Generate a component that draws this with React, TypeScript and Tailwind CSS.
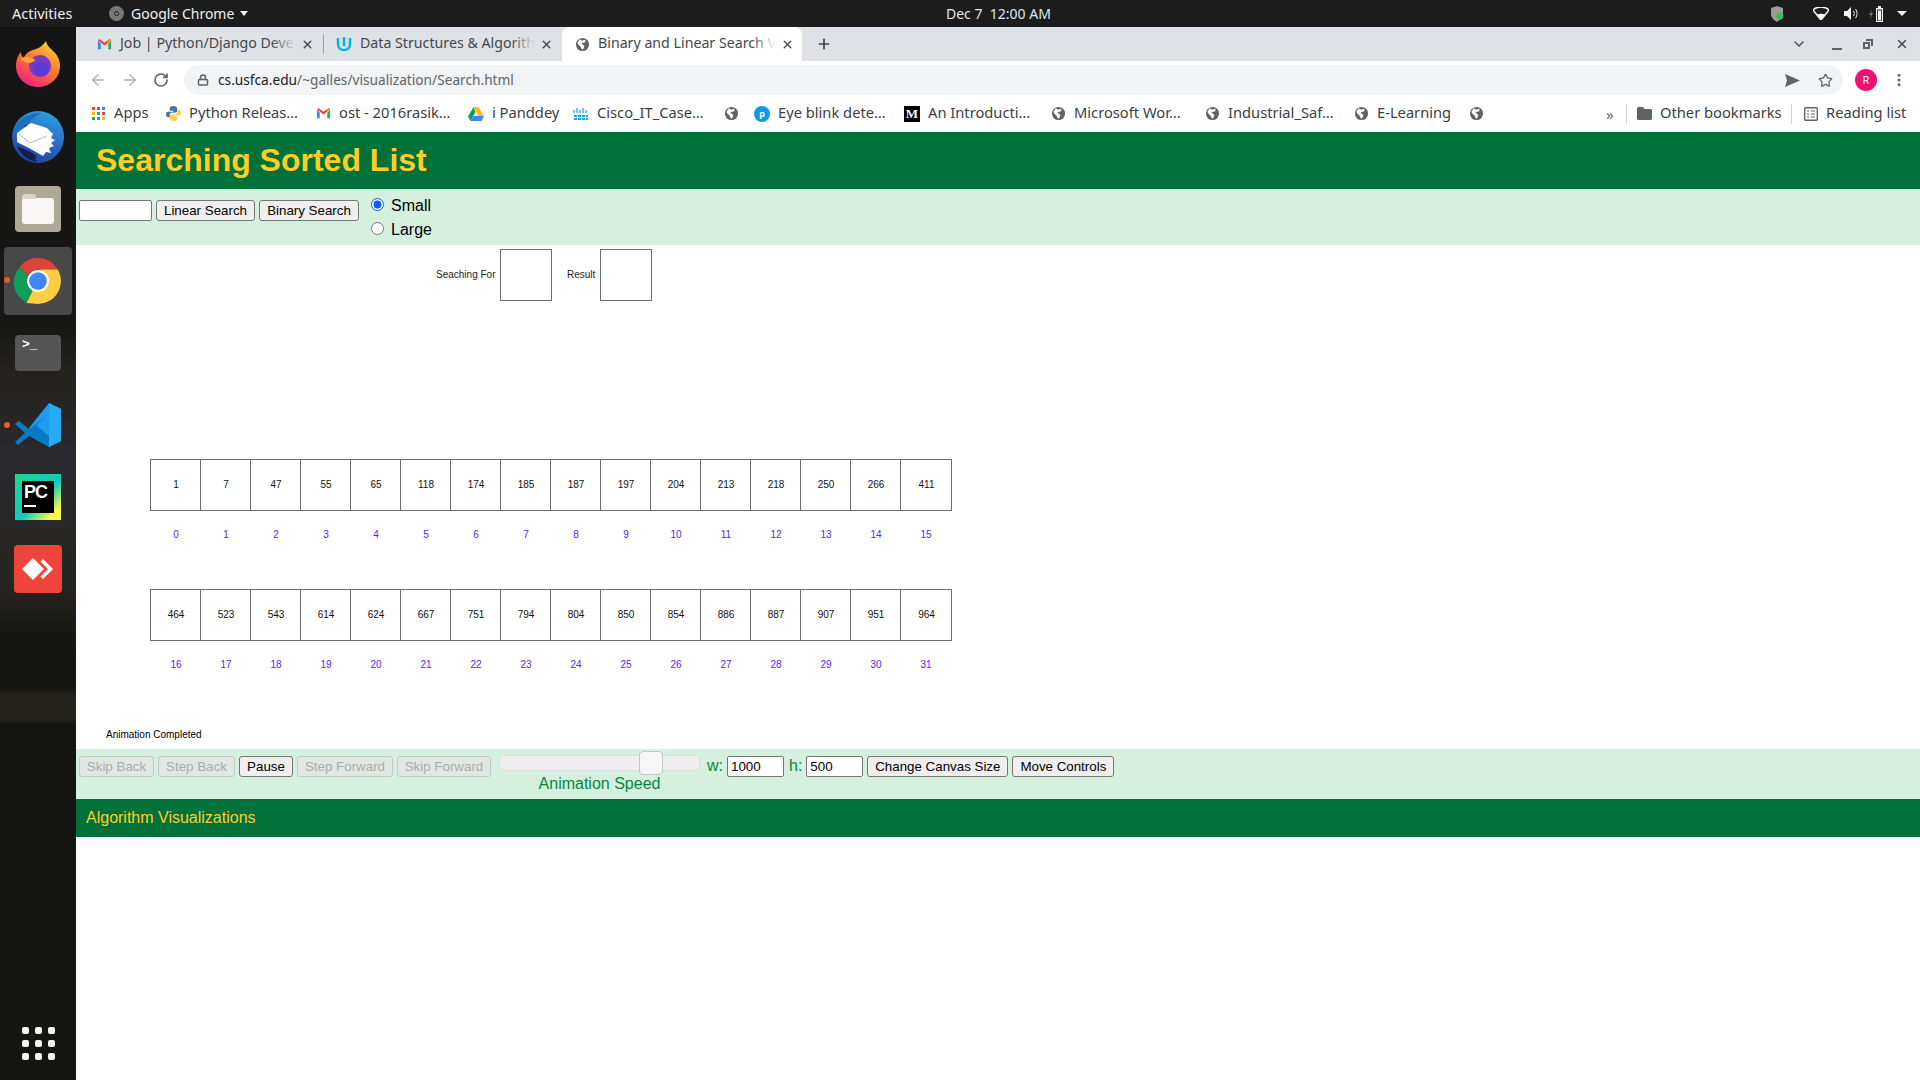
import { Lock, ArrowLeft, ArrowRight, RotateCw, Star, X, Plus, ChevronDown, EllipsisVertical } from "lucide-react";

const row1 = [1, 7, 47, 55, 65, 118, 174, 185, 187, 197, 204, 213, 218, 250, 266, 411];
const row2 = [464, 523, 543, 614, 624, 667, 751, 794, 804, 850, 854, 886, 887, 907, 951, 964];

const uiFont = "font-['Noto_Sans',sans-serif]";

function Gmail({ size = 16 }: { size?: number }) {
    return (
        <svg width={size} height={size} viewBox="0 0 16 16">
            <path d="M1 4v9h3V7z" fill="#4285f4" />
            <path d="M12 7v6h3V4z" fill="#34a853" />
            <path d="M1 3.5 8 9l7-5.5L13.5 2 8 6 2.5 2z" fill="#ea4335" />
            <path d="M12 3.2 15 4l-3 3z" fill="#fbbc04" />
        </svg>
    );
}

function Globe({ size = 16 }: { size?: number }) {
    return (
        <svg width={size} height={size} viewBox="0 0 16 16">
            <circle cx="8" cy="8" r="7" fill="#5f6368" />
            <path d="M5 2.5 8 4l2-1 1.5 1L10 6H8L7 7.500 9 8.500l1 1-1 3-1.500 1L6 10.500 3.500 8 2.500 6z" fill="#fff" />
        </svg>
    );
}

function Chrome({ size = 62 }: { size?: number }) {
    return (
        <svg width={size} height={size} viewBox="0 0 48 48">
            <path d="M24 2a22 22 0 0 1 19 11H24a11 11 0 0 0-10 6L6.500 10.500A22 22 0 0 1 24 2z" fill="#db4437" />
            <path d="M6.500 10.500 14 19a11 11 0 0 0 5 14l-6 12A22 22 0 0 1 6.500 10.500z" fill="#0f9d58" />
            <path d="M43 13a22 22 0 0 1-19 33l-11-1 6-12a11 11 0 0 0 14-5 11 11 0 0 0-9-15z" fill="#ffcd40" />
            <circle cx="24" cy="24" r="10.500" fill="#fff" />
            <circle cx="24" cy="24" r="8.500" fill="#4285f4" />
        </svg>
    );
}

function Firefox() {
    return (
        <svg width="48" height="48" viewBox="0 0 48 48">
            <defs>
                <linearGradient id="ff" x1="0.8" y1="0" x2="0.2" y2="1">
                    <stop offset="0" stopColor="#ffd43a" />
                    <stop offset="0.45" stopColor="#ff7a2a" />
                    <stop offset="1" stopColor="#f0188a" />
                </linearGradient>
            </defs>
            <path d="M32 1c1 5 4 7 8 11 5 5 6 10 6 14 0 12-10 21-22 21S2 38 2 26c0-6 2-11 5-14 0 3 1 5 3 6 1-4 5-7 9-8 4-1 9-3 13-9z" fill="url(#ff)" />
            <circle cx="26" cy="26" r="11" fill="#7b3bc4" />
            <ellipse cx="27" cy="29" rx="8" ry="6.500" fill="#5a3ad0" />
            <path d="M6 19c5-3 10-2 14 0 3 2-2 3-4 4-3 0-7-1-10-4z" fill="#ffa436" />
        </svg>
    );
}

function Thunderbird() {
    return (
        <svg width="54" height="54" viewBox="0 0 54 54">
            <defs>
                <linearGradient id="tb" x1="0.7" y1="0" x2="0.3" y2="1">
                    <stop offset="0" stopColor="#2a9fe0" />
                    <stop offset="0.6" stopColor="#2a62bd" />
                    <stop offset="1" stopColor="#1d3f9c" />
                </linearGradient>
            </defs>
            <circle cx="27" cy="27" r="26" fill="url(#tb)" />
            <path d="M4 20C8 8 18 3 30 3c-6 4-10 6-12 10L6 23z" fill="#1a6fc0" />
            <path d="M6 36c3 8 10 14 20 16-2-3-2-5 0-6l-8-5z" fill="#171d4e" />
            <circle cx="15" cy="16" r="1.500" fill="#5a3a1a" />
            <path d="M6 23 20 13l16 5 6 6-2 4 4 2-4 3 3 3-5 2 2 5-5-1-3 4-14-8-12-6z" fill="#fff" />
            <path d="M8 24l11 9 17-7" stroke="#b8b8b8" strokeWidth="1" fill="none" />
        </svg>
    );
}

function VsCode() {
    return (
        <svg width="46" height="46" viewBox="0 0 46 46">
            <path d="M34 1 46 7v32l-12 6-20-19z" fill="#1f9cf0" />
            <path d="M34 1v44l12-6V7z" fill="#2aa9f5" />
            <path d="M34 12 14 27 4 19 0 22l10 9L0 40l3 3 11-9 20 11V34L21 23z" fill="#0b7ac4" />
        </svg>
    );
}

function PyCharm() {
    return (
        <div className="relative w-[46px] h-[46px] bg-[linear-gradient(135deg,#21d789_0%,#10c9c0_55%,#fcf84a_85%)] flex items-center justify-center">
            <div className="w-[32px] h-[32px] bg-black flex flex-col pl-[2px] pt-[1px]">
                <span className="font-['Liberation_Sans',sans-serif] font-bold text-white text-[18px] leading-[20px] tracking-tighter">PC</span>
                <span className="w-[12px] h-[2px] bg-white mt-[3px]"></span>
            </div>
        </div>
    );
}

function AnyDesk() {
    return (
        <div className="w-[48px] h-[48px] rounded-[4px] bg-[#ef443b] flex items-center justify-center">
            <svg width="34" height="24" viewBox="0 0 34 24">
                <path d="M12 1l11 11-11 11L1 12z" fill="#fff" />
                <path d="M22 2l10 10-10 10-2.500-2.500L27 12l-7.500-7.500z" fill="#fff" />
            </svg>
        </div>
    );
}

function Dock() {
    return (
        <div className="relative w-[76px] shrink-0 h-full flex flex-col items-center bg-[linear-gradient(180deg,#141414_0px,#171716_300px,#24231f_350px,#2a2a30_430px,#26251f_560px,#161614_610px,#141412_660px,#23221a_668px,#23221a_692px,#141412_698px,#141412_100%)]">
            <div className="h-[48px] mt-[13px] flex items-center justify-center"><Firefox /></div>
            <div className="h-[54px] mt-[22px] flex items-center justify-center"><Thunderbird /></div>
            <div className="mt-[22px] w-[46px] h-[46px] rounded-[4px] bg-[#aea898] flex items-center justify-center">
                <div className="relative w-[32px] h-[26px] rounded-[3px] bg-[#f7f6f4] mt-[4px]">
                    <div className="absolute -top-[4px] left-0 w-[14px] h-[5px] rounded-t-[3px] bg-[#d8d4ca]"></div>
                </div>
            </div>
            <div className="relative mt-[15px] w-[68px] h-[68px] rounded-[4px] bg-[#484848] flex items-center justify-center">
                <Chrome size={50} />
                <span className="absolute left-[0px] top-[30px] w-[6px] h-[6px] rounded-full bg-[#ee5a24]"></span>
            </div>
            <div className="mt-[20px] w-[46px] h-[36px] rounded-[4px] bg-[#555555] text-white font-['Liberation_Mono',monospace] font-bold text-[13px] leading-[14px] pl-[7px] pt-[3px]">&gt;_</div>
            <div className="relative mt-[31px] flex items-center justify-center">
                <VsCode />
                <span className="absolute -left-[11px] top-[20px] w-[6px] h-[6px] rounded-full bg-[#ee5a24]"></span>
            </div>
            <div className="mt-[26px]"><PyCharm /></div>
            <div className="mt-[25px]"><AnyDesk /></div>
            <div className="mt-auto mb-[20px] grid grid-cols-3 gap-[6px]">
                {Array.from({ length: 9 }).map((_, i) => (
                    <span key={i} className="w-[7px] h-[7px] rounded-[2px] bg-[#f2f2f2]"></span>
                ))}
            </div>
        </div>
    );
}

function TopBar() {
    return (
        <div className={`relative h-[27px] shrink-0 bg-[#1c1c1c] text-[#f0f0f0] text-[14px] flex items-center ${uiFont}`}>
            <span className="ml-[12px] w-[97px] text-[14.500px]">Activities</span>
            <span className="w-[15px] h-[15px] rounded-full bg-[#777777] flex items-center justify-center">
                <span className="w-[5px] h-[5px] rounded-full border border-[#1c1c1c]"></span>
            </span>
            <span className="ml-[7px]">Google Chrome</span>
            <span className="ml-[6px] border-x-[4px] border-x-transparent border-t-[5px] border-t-[#f0f0f0]"></span>
            <span className="absolute left-[946px] top-[3px] w-[104px] text-center text-[#dbe7f0] leading-[21px] whitespace-pre">Dec 7  12:00 AM</span>
            <div className="ml-auto flex items-center">
                <svg width="14" height="16" viewBox="0 0 14 16" className="mr-[29px]">
                    <path d="M7 0l6 2v6c0 4-3 6-6 8-3-2-6-4-6-8V2z" fill="#9a9a9a" />
                    <circle cx="10" cy="10" r="3.500" fill="#3dbb5c" />
                </svg>
                <svg width="16" height="13" viewBox="0 0 16 13" className="mr-[15px]">
                    <path d="M0 3c4-4 12-4 16 0L8 13z" fill="none" stroke="#f5f5f5" strokeWidth="1.500" />
                    <path d="M4 7.500c2-1 6-1 8 0L8 12.500z" fill="#f5f5f5" />
                </svg>
                <svg width="15" height="13" viewBox="0 0 15 13" className="mr-[10px]">
                    <path d="M0 4h3l4-4v13l-4-4H0z" fill="#f5f5f5" />
                    <path d="M9.500 4c1 1.500 1 3.500 0 5M11.500 2c2 2.500 2 6.500 0 9" fill="none" stroke="#f5f5f5" strokeWidth="1" />
                </svg>
                <svg width="14" height="16" viewBox="0 0 14 16" className="mr-[14px]">
                    <path d="M3 3 0 9h2l-1 4 3-6H2z" fill="#777777" />
                    <path d="M7 2h2V0h3v2h2v14H7z" fill="#f5f5f5" />
                    <rect x="8" y="3.500" width="5" height="11.500" fill="#1c1c1c" />
                    <rect x="8.800" y="4.500" width="3.400" height="10" fill="#f5f5f5" />
                </svg>
                <span className="mr-[13px] border-x-[5px] border-x-transparent border-t-[5px] border-t-[#f0f0f0]"></span>
            </div>
        </div>
    );
}

function Tab({ title, icon, active, width }: { title: string; icon: React.ReactNode; active?: boolean; width: string }) {
    return (
        <div className={`${width} h-full flex items-center pl-[12px] pr-[9px] shrink-0 ${active ? "bg-white rounded-t-[8px]" : ""}`}>
            <span className="w-[16px] h-[16px] shrink-0 flex items-center justify-center">{icon}</span>
            <span className="relative ml-[8px] flex-1 whitespace-nowrap text-[14.200px] leading-[18px] -mt-[2px] text-[#45474a]">
                {title}
                <span className={`absolute right-0 top-0 bottom-0 w-[24px] bg-gradient-to-r from-transparent ${active ? "to-white" : "to-[#dee1e6]"}`}></span>
            </span>
            <X size={13} strokeWidth={2.5} className="ml-[5px] shrink-0 text-[#45474a]" />
        </div>
    );
}

function TabStrip() {
    return (
        <div className={`h-[34px] shrink-0 bg-[#dee1e6] flex items-end ${uiFont}`}>
            <div className="w-[8px] shrink-0"></div>
            <Tab width="w-[239px]" title="Job | Python/Django Deve" icon={<Gmail size={15} />} />
            <span className="w-px h-[20px] bg-[#9aa0a6] mb-[7px] shrink-0"></span>
            <Tab
                width="w-[238px]"
                title="Data Structures & Algorith"
                icon={
                    <svg width="16" height="16" viewBox="0 0 16 16">
                        <path d="M2 2v6c0 4 3 6 6 6s6-2 6-6V2M8 1v9" fill="none" stroke="#02b3e4" strokeWidth="2.500" />
                    </svg>
                }
            />
            <Tab width="w-[240px]" active title="Binary and Linear Search V" icon={<Globe size={15} />} />
            <Plus size={16} strokeWidth={2.5} className="ml-[14px] mb-[9px] text-[#45474a]" />
            <div className="ml-auto h-full flex items-center text-[#45474a]">
                <ChevronDown size={16} strokeWidth={2} className="mr-[25px]" />
                <span className="w-[10px] h-[2px] bg-[#5f6368] mt-[10px] mr-[21px]"></span>
                <svg width="10" height="10" viewBox="0 0 10 10" className="mr-[22px]">
                    <path d="M3 0h7v7H8V2H3z M0 3h7v7H0z" fill="#5f6368" />
                    <rect x="2" y="5" width="3" height="3" fill="#dee1e6" />
                </svg>
                <X size={14} strokeWidth={2.5} className="mr-[11px]" />
            </div>
        </div>
    );
}

function Toolbar() {
    return (
        <div className={`h-[34px] shrink-0 bg-white flex items-start pt-[4px] ${uiFont}`}>
            <div className="w-[108px] h-[30px] shrink-0 flex items-center pl-[13px] gap-[14px] text-[#b0b3b8]">
                <ArrowLeft size={18} strokeWidth={2} />
                <ArrowRight size={18} strokeWidth={2} />
                <RotateCw size={16} strokeWidth={2.5} className="text-[#5f6368]" />
            </div>
            <div className="w-[1659px] h-[30px] rounded-full bg-[#f1f3f4] flex items-center pl-[13px] pr-[10px]">
                <Lock size={12} strokeWidth={3} className="text-[#5f6368]" />
                <span className="ml-[9px] text-[13.700px] leading-[18px] text-[#202124]">cs.usfca.edu<span className="text-[#5f6368]">/~galles/visualization/Search.html</span></span>
                <svg width="15" height="13" viewBox="0 0 15 13" className="ml-auto mr-[1px] text-[#5f6368]">
                    <path d="M0 0l15 6.500L0 13l2-6.500z" fill="currentColor" />
                </svg>
                <Star size={15} strokeWidth={2} className="ml-[17px] text-[#5f6368]" />
            </div>
            <div className="ml-[12px] w-[22px] h-[22px] mt-[4px] rounded-full bg-[#f20f72] text-white text-[11px] flex items-center justify-center">R</div>
            <EllipsisVertical size={16} strokeWidth={2.5} className="ml-[14px] mt-[7px] text-[#5f6368]" />
        </div>
    );
}

function Apps() {
    const colors = ["#ea4335", "#ea4335", "#4285f4", "#fbbc04", "#34a853", "#ea4335", "#34a853", "#4285f4", "#fbbc04"];
    return (
        <span className="grid grid-cols-3 gap-[2px] w-[13px]">
            {colors.map((c, i) => (
                <span key={i} className="w-[3px] h-[3px]" style={{ background: c }}></span>
            ))}
        </span>
    );
}

function Bookmark({ icon, label, width }: { icon: React.ReactNode; label?: string; width: string }) {
    return (
        <div className={`${width} shrink-0 flex items-center`}>
            <span className="w-[16px] h-[16px] flex items-center justify-center shrink-0">{icon}</span>
            {label && <span className="ml-[8px] whitespace-nowrap text-[14.700px] leading-[18px] -mt-[4px] text-[#3c4043]">{label}</span>}
        </div>
    );
}

function BookmarksBar() {
    return (
        <div className={`h-[37px] shrink-0 bg-white flex items-center pl-[14px] ${uiFont}`}>
            <Bookmark width="w-[75px]" icon={<Apps />} label="Apps" />
            <Bookmark
                width="w-[150px]"
                icon={
                    <svg width="15" height="15" viewBox="0 0 16 16">
                        <path d="M8 0C5 0 4 1 4 3v2h4v1H2C0 6 0 8 0 9s1 3 2 3h2v-2c0-2 1-3 3-3h3c1 0 2-1 2-2V3c0-2-2-3-4-3z" fill="#3b78a8" />
                        <path d="M8 16c3 0 4-1 4-3v-2H8v-1h6c2 0 2-2 2-3s-1-3-2-3h-2v2c0 2-1 3-3 3H6c-1 0-2 1-2 2v2c0 2 2 3 4 3z" fill="#ffd343" />
                    </svg>
                }
                label="Python Releas…"
            />
            <Bookmark width="w-[153px]" icon={<Gmail size={15} />} label="ost - 2016rasik…" />
            <Bookmark
                width="w-[105px]"
                icon={
                    <svg width="16" height="14" viewBox="0 0 16 14">
                        <path d="M5.500 0h5l5 9h-5z" fill="#fbbc04" />
                        <path d="M5.500 0 0 9.500 2.500 14l5-9z" fill="#0f9d58" />
                        <path d="M2.500 14h11l2.500-5H5.500z" fill="#4285f4" />
                    </svg>
                }
                label="i Panddey"
            />
            <Bookmark
                width="w-[150px]"
                icon={
                    <svg width="16" height="12" viewBox="0 0 16 12">
                        <path d="M1 2v3M4 0v5M7 2v3M10 0v5M13 2v3" stroke="#1ba0d7" strokeWidth="1.200" />
                        <path d="M1 8h14M1 11h14" stroke="#1ba0d7" strokeWidth="2" strokeDasharray="3 1" />
                    </svg>
                }
                label="Cisco_IT_Case…"
            />
            <Bookmark width="w-[31px]" icon={<Globe size={15} />} />
            <Bookmark
                width="w-[150px]"
                icon={<span className="w-[16px] h-[16px] rounded-full bg-[#0b9be3] text-white text-[9px] font-bold leading-[16px] text-center">p</span>}
                label="Eye blink dete…"
            />
            <Bookmark
                width="w-[146px]"
                icon={<span className="w-[16px] h-[16px] bg-black text-white font-['Liberation_Serif',serif] font-bold text-[13px] leading-[16px] text-center">M</span>}
                label="An Introducti…"
            />
            <Bookmark width="w-[154px]" icon={<Globe size={15} />} label="Microsoft Wor…" />
            <Bookmark width="w-[149px]" icon={<Globe size={15} />} label="Industrial_Saf…" />
            <Bookmark width="w-[115px]" icon={<Globe size={15} />} label="E-Learning" />
            <Bookmark width="w-[138px]" icon={<Globe size={15} />} />
            <span className="text-[15px] text-[#5f6368] w-[20px] shrink-0 leading-[16px]">»</span>
            <span className="w-px h-[20px] bg-[#d0d3d6] shrink-0 mr-[10px]"></span>
            <svg width="15" height="13" viewBox="0 0 15 13" className="shrink-0">
                <path d="M0 1.500C0 .700.700 0 1.500 0H6l1.500 2H13.500c.8 0 1.500.7 1.500 1.500v8c0 .8-.7 1.500-1.500 1.500h-12C.7 13 0 12.300 0 11.500z" fill="#5f6368" />
            </svg>
            <span className="ml-[8px] text-[14.700px] leading-[18px] -mt-[4px] text-[#3c4043] whitespace-nowrap w-[131px]">Other bookmarks</span>
            <span className="w-px h-[20px] bg-[#d0d3d6] shrink-0 mr-[12px]"></span>
            <svg width="14" height="14" viewBox="0 0 14 14" className="shrink-0">
                <rect x="0.700" y="0.700" width="12.600" height="12.600" rx="1" fill="none" stroke="#5f6368" strokeWidth="1.400" />
                <path d="M3 4h2M7 4h4M3 7h2M7 7h4M3 10h2M7 10h4" stroke="#5f6368" strokeWidth="1.200" />
            </svg>
            <span className="ml-[8px] text-[14.700px] leading-[18px] -mt-[4px] text-[#3c4043] whitespace-nowrap">Reading list</span>
        </div>
    );
}

function PageButton({ label, width, disabled }: { label: string; width: string; disabled?: boolean }) {
    return (
        <button
            disabled={disabled}
            className={`${width} h-[21px] shrink-0 rounded-[3px] border text-[13.33px] leading-[17px] text-center ${disabled ? "border-[#c3cbc5] text-[#a8aeaa] bg-[#dfe8e2]" : "border-[#767676] text-black bg-[#efefef]"}`}
        >
            {label}
        </button>
    );
}

function CellRow({ values, start }: { values: number[]; start: number }) {
    return (
        <div className="ml-[74px]">
            <div className="flex">
                {values.map((v) => (
                    <div key={v} className="w-[51px] last:w-[52px] h-[52px] shrink-0 border border-[#6e6e6e] -mr-px last:mr-0 flex items-center justify-center pl-px pb-px text-[10px] text-[#111111]">
                        {v}
                    </div>
                ))}
            </div>
            <div className="flex mt-[18px]">
                {values.map((v, i) => (
                    <div key={v} className="w-[50px] shrink-0 text-center pl-[2px] text-[10px] leading-[12px] text-[#5a22ff]">
                        {start + i}
                    </div>
                ))}
            </div>
        </div>
    );
}

function Page() {
    return (
        <div className="flex-1 min-h-0 bg-white font-['Liberation_Sans',Arial,sans-serif]">
            <div className="h-[57px] bg-[#007138] pl-[20px] flex items-center">
                <h1 className="text-[32px] font-bold text-[#ffcc28] leading-[36px] -mt-[2px]">Searching Sorted List</h1>
            </div>
            <div className="h-[56px] bg-[#d6f0df] flex items-start">
                <input className="ml-[3px] mt-[11px] w-[73px] h-[21px] border border-[#767676] rounded-[2px] bg-white" />
                <div className="ml-[4px] mt-[11px] flex"><PageButton width="w-[99px]" label="Linear Search" /></div>
                <div className="ml-[4px] mt-[11px] flex"><PageButton width="w-[100px]" label="Binary Search" /></div>
                <div className="ml-[12px] flex flex-col text-[16px] leading-[24px] text-black pt-[4px]">
                    <label className="flex items-center h-[24px]">
                        <input type="radio" name="size" defaultChecked className="w-[13px] h-[13px] -mt-[1px] accent-[#0a5cff]" />
                        <span className="ml-[7px] pt-px">Small</span>
                    </label>
                    <label className="flex items-center h-[24px]">
                        <input type="radio" name="size" className="w-[13px] h-[13px] -mt-[1px]" />
                        <span className="ml-[7px] pt-px">Large</span>
                    </label>
                </div>
            </div>
            <div className="h-[504px] flex flex-col">
                <div className="ml-[360px] mt-[4px] flex items-center text-[10px] text-[#222222]">
                    <span className="w-[64px] pb-[2px]">Seaching For</span>
                    <div className="w-[52px] h-[52px] border border-[#6e6e6e]"></div>
                    <span className="ml-[15px] w-[33px] pb-[2px]">Result</span>
                    <div className="w-[52px] h-[52px] border border-[#6e6e6e]"></div>
                </div>
                <div className="mt-[158px]"><CellRow values={row1} start={0} /></div>
                <div className="mt-[48px]"><CellRow values={row2} start={16} /></div>
                <div className="ml-[30px] mt-[58px] text-[10px] leading-[12px] text-black">Animation Completed</div>
            </div>
            <div className="relative h-[50px] bg-[#d6f0df] flex items-start pt-[7px] pl-[3px] text-[16px]">
                <div className="flex gap-[4px]">
                    <PageButton disabled width="w-[75px]" label="Skip Back" />
                    <PageButton disabled width="w-[77px]" label="Step Back" />
                    <PageButton width="w-[54px]" label="Pause" />
                    <PageButton disabled width="w-[96px]" label="Step Forward" />
                    <PageButton disabled width="w-[94px]" label="Skip Forward" />
                </div>
                <div className="relative ml-[8px] w-[201px] -mt-[1px] flex flex-col items-center shrink-0">
                    <div className="relative w-full h-[16px] rounded-[4px] bg-[#eeeeee] border border-[#dddddd]">
                        <span className="absolute left-[139px] -top-[5px] w-[24px] h-[24px] rounded-[4px] bg-[#f6f6f6] border border-[#c5c5c5]"></span>
                    </div>
                    <span className="mt-[3px] text-[#00893c] leading-[20px]">Animation Speed</span>
                </div>
                <span className="ml-[7px] text-[#00893c] leading-[20px]">w:</span>
                <input defaultValue="1000" className="ml-[4px] w-[57px] h-[21px] border border-[#767676] rounded-[2px] bg-white text-[13.33px] pl-[3px]" />
                <span className="ml-[5px] text-[#00893c] leading-[20px]">h:</span>
                <input defaultValue="500" className="ml-[4px] w-[57px] h-[21px] border border-[#767676] rounded-[2px] bg-white text-[13.33px] pl-[3px]" />
                <div className="ml-[4px] flex gap-[4px]">
                    <PageButton width="w-[141px]" label="Change Canvas Size" />
                    <PageButton width="w-[102px]" label="Move Controls" />
                </div>
            </div>
            <div className="h-[38px] bg-[#007138] pl-[10px] flex items-center text-[16px] text-[#ffcc28]">Algorithm Visualizations</div>
        </div>
    );
}

export default function App() {
    return (
        <div className="w-[1920px] h-[1080px] flex flex-col overflow-hidden bg-white">
            <TopBar />
            <div className="flex-1 min-h-0 flex">
                <Dock />
                <div className="flex-1 min-w-0 flex flex-col">
                    <TabStrip />
                    <Toolbar />
                    <BookmarksBar />
                    <Page />
                </div>
            </div>
        </div>
    );
}
